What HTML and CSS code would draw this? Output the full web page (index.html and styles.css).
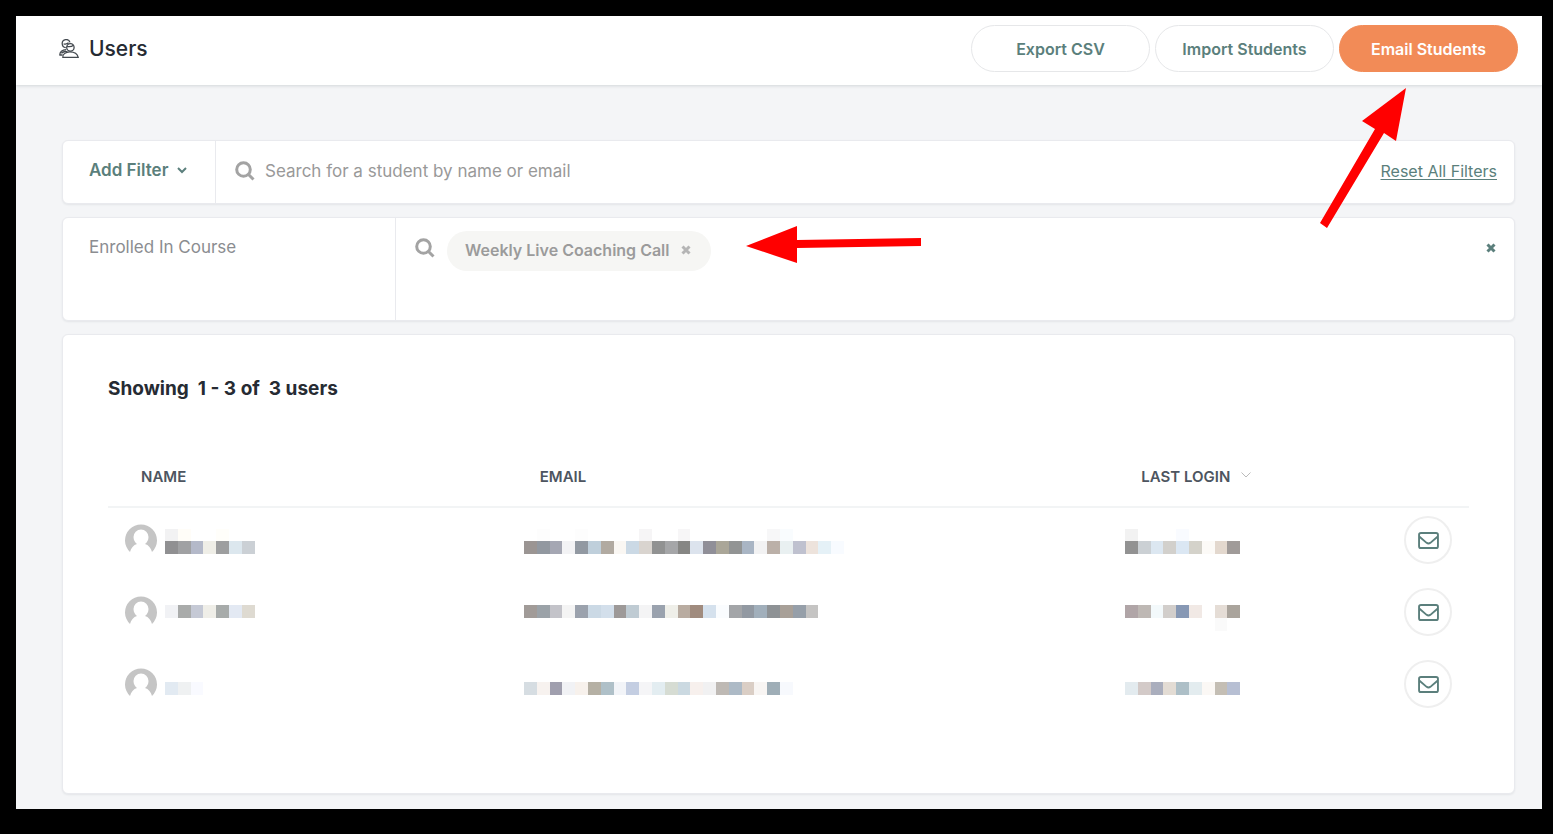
FILE: index.html
```html
<!DOCTYPE html>
<html lang="en">
<head>
    <meta charset="UTF-8">
    <meta name="viewport" content="width=device-width, initial-scale=1.0">
    <title>Users</title>
    <link rel="stylesheet" href="styles.css">
</head>
<body>
    <div class="page">
        <header class="topbar">
            <svg class="users-icon" viewBox="0 0 20 20" aria-hidden="true">
                <path d="M6.8 8.600A4 4 0 1 1 11 3.400M4.600 4.800c2 .6 3.600.2 5-1"/>
                <circle cx="11.400" cy="8.400" r="3.700"/>
                <path d="M7.900 7.400c2.500.6 5 .2 6.500-1.200"/>
                <path d="M3.800 18.400c-.6-2.600 2.600-5.600 7-5.600 4.800 0 7.800 2.600 8.400 5.600z"/>
                <path d="M3.600 16H.9c-.4-2.800 2.300-5.200 6.300-5.400M2.400 14.200c1.800-1.600 4-2 6-1.400"/>
            </svg>
            <h1>Users</h1>
            <div class="actions">
                <button class="btn" type="button">Export CSV</button>
                <button class="btn" type="button">Import Students</button>
                <button class="btn btn-primary" type="button">Email Students</button>
            </div>
            <svg class="arrow arrow-email" viewBox="0 0 88 144" aria-hidden="true">
                <path d="M87 1 43 34l13 8L1 136l7 5 57-95 12 8z"/>
            </svg>
        </header>

        <main>
            <section class="card search-card">
                <button class="add-filter" type="button">
                    Add Filter
                    <svg class="chevron" viewBox="0 0 12 8" aria-hidden="true"><path d="M2 2l4 4 4-4"/></svg>
                </button>
                <div class="search-box">
                    <svg class="search-icon" viewBox="0 0 20 20" aria-hidden="true"><circle cx="8.5" cy="8.5" r="6.8"/><path d="M13.5 13.5l5 5"/></svg>
                    <input type="text" aria-label="Search students" placeholder="Search for a student by name or email">
                    <a class="reset" href="#">Reset All Filters</a>
                </div>
            </section>

            <section class="card filter-card">
                <div class="filter-name">Enrolled In Course</div>
                <div class="filter-value">
                    <svg class="search-icon" viewBox="0 0 20 20" aria-hidden="true"><circle cx="8.5" cy="8.5" r="6.8"/><path d="M13.5 13.5l5 5"/></svg>
                    <span class="chip">
                        Weekly Live Coaching Call
                        <button class="close" type="button" aria-label="Remove course">
                            <svg viewBox="0 0 10 10" aria-hidden="true"><path d="M1.5 1.5l7 7M8.5 1.5l-7 7"/></svg>
                        </button>
                    </span>
                    <svg class="arrow arrow-chip" viewBox="0 0 176 38" aria-hidden="true">
                        <path d="M0 20 51 0v14l124-2v8l-124 2v15z"/>
                    </svg>
                    <button class="close close-filter" type="button" aria-label="Remove filter">
                        <svg viewBox="0 0 10 10" aria-hidden="true"><path d="M1.5 1.5l7 7M8.5 1.5l-7 7"/></svg>
                    </button>
                </div>
            </section>

            <section class="card list-card">
                <h2>Showing &nbsp;1 - 3 of &nbsp;3 users</h2>
                <table>
                    <thead>
                        <tr>
                            <th class="col-name">NAME</th>
                            <th class="col-email">EMAIL</th>
                            <th>LAST LOGIN <svg class="sort" viewBox="0 0 12 8" aria-hidden="true"><path d="M1.5 1.5l4.5 4.5 4.5-4.5"/></svg></th>
                            <th class="col-action"></th>
                        </tr>
                    </thead>
                    <tbody id="userList"></tbody>
                </table>
            </section>
        </main>
    </div>

    <script src="script.js"></script>
</body>
</html>
```

FILE: styles.css
```css
* {
    box-sizing: border-box;
}

body {
    margin: 0;
    padding: 16px 11px 25px 16px;
    background-color: #000;
    font-family: Inter, "Liberation Sans", sans-serif;
    font-size: 16px;
    color: #262b33;
}

button,
input {
    font-family: inherit;
    font-size: inherit;
}

button {
    padding: 0;
    border: none;
    background: none;
    color: #5b7f7c;
    cursor: pointer;
}

svg {
    display: block;
    flex: none;
    fill: none;
    stroke: currentColor;
}

.page {
    background-color: #f4f5f7;
}

.topbar {
    position: relative;
    display: flex;
    align-items: center;
    height: 69px;
    padding: 0 24px 4px 43px;
    background-color: #fff;
    box-shadow: 0 1px 3px rgba(40, 50, 70, 0.16);
}

.users-icon {
    width: 20px;
    height: 20px;
    color: #444a50;
    stroke-width: 1.3;
}

h1 {
    margin: 0 0 0 10px;
    font-size: 21px;
    font-weight: 500;
}

.actions {
    display: flex;
    gap: 5px;
    margin-left: auto;
}

.btn {
    width: 179px;
    height: 47px;
    border: 1px solid #e6e7e9;
    border-radius: 24px;
    background-color: #fff;
    font-weight: 600;
}

.btn-primary {
    border-color: #f28b57;
    background-color: #f28b57;
    color: #fff;
}

.arrow {
    fill: #f00;
    stroke: none;
}

.arrow-email {
    position: absolute;
    top: 71px;
    right: 135px;
    z-index: 1;
    width: 88px;
    height: 144px;
}

main {
    display: flex;
    flex-direction: column;
    gap: 13px;
    padding: 55px 27px 15px 46px;
}

.card {
    border: 1px solid #e9eaee;
    border-radius: 6px;
    background-color: #fff;
    box-shadow: 0 1px 2px rgba(40, 50, 70, 0.08);
}

.search-card {
    display: flex;
    height: 64px;
    font-size: 17px;
}

.add-filter {
    display: flex;
    align-items: center;
    gap: 8px;
    width: 153px;
    padding: 0 0 4px 26px;
    border-right: 1px solid #e9eaee;
    font-weight: 600;
}

.chevron {
    width: 12px;
    height: 8px;
    stroke-width: 2;
}

.search-box {
    display: flex;
    flex: 1;
    align-items: center;
    padding: 0 17px 2px 19px;
}

.search-icon {
    width: 20px;
    height: 20px;
    color: #a3a3a3;
    stroke-width: 3;
}

.search-box input {
    flex: 1;
    min-width: 0;
    padding: 0 10px;
    border: none;
    outline: none;
}

.search-box input::placeholder {
    color: #999;
    opacity: 1;
}

.reset {
    font-size: 16px;
    color: #5b7f7c;
    text-underline-offset: 2px;
}

.filter-card {
    display: flex;
    min-height: 104px;
}

.filter-name {
    width: 333px;
    padding: 19px 26px;
    border-right: 1px solid #e9eaee;
    font-size: 17px;
    line-height: 20px;
    color: #8b8d91;
}

.filter-value {
    display: flex;
    flex: 1;
    align-items: flex-start;
    padding: 13px 18px 13px 19px;
}

.filter-value .search-icon {
    margin-top: 7px;
}

.chip {
    display: flex;
    align-items: center;
    gap: 11px;
    height: 40px;
    margin: 0 35px 0 12px;
    padding: 0 20px 3px 18px;
    border-radius: 20px;
    background-color: #f6f6f4;
    font-weight: 600;
    color: #9b9b9b;
}

.close svg {
    width: 10px;
    height: 10px;
    stroke-width: 3;
}

.chip .close {
    color: #b5b5b5;
}

.arrow-chip {
    width: 176px;
    height: 38px;
    margin-top: -5px;
}

.close-filter {
    margin: 12px 0 0 auto;
}

.list-card {
    padding: 44px 45px 69px;
}

h2 {
    margin: 0;
    font-size: 19px;
    font-weight: 700;
    line-height: 20px;
}

table {
    width: 100%;
    margin-top: 47px;
    border-spacing: 0;
    table-layout: fixed;
}

th {
    height: 62px;
    padding: 0 33px;
    border-bottom: 2px solid #f2f4f5;
    font-size: 15px;
    font-weight: 600;
    color: #4d5560;
    text-align: left;
    white-space: nowrap;
}

.col-name {
    width: 29.3%;
}

.col-email {
    width: 44.2%;
}

.col-action {
    width: 10%;
}

.sort {
    display: inline-block;
    width: 12px;
    height: 8px;
    margin: 0 0 3px 6px;
    color: #bbb;
}

td {
    height: 72px;
    padding: 0 17px;
    vertical-align: top;
}

.user {
    display: flex;
    gap: 8px;
}

.avatar {
    width: 32px;
    height: 32px;
    margin-top: 16px;
    fill: #c5c5c5;
    stroke: none;
}

.mosaic {
    height: 64px;
    stroke: none;
}

.mail {
    display: flex;
    align-items: center;
    justify-content: center;
    width: 48px;
    height: 48px;
    margin: 8px 0 0 auto;
    border: 2px solid #efefef;
    border-radius: 50%;
}

.mail svg {
    width: 21px;
    height: 17px;
    stroke-width: 2;
}
```

FILE: script.js
```js
// side of one square in a masked value
const CELL = 12.8;

// each masked value is a list of strips: top edge, then one colour per square
const users = [
    {
        name: [
            [20.5, 'f2f2f3 fffdf8 - - fffefa'],
            [33.3, '909092 a0a1a3 b4b9c9 efeee7 9d9e9f dce7ee cbd0d5']
        ],
        email: [
            [20.5, '- fdfdfd - - fdfdfd - - - - f6f5f6 - - f7f6f7 - - - - - - f7f7f8 f9fcfe'],
            [33.3, '9b9593 9298a0 a5a7b3 f3f3f5 9299a2 bfcfdb b1aaa1 faf7f3 cbd9e5 d9d4cf 919292 a5a6a8 868684 dce3ed 908f98 aaa698 929494 a9b5c4 f2f2f3 bbb0a8 e9f0f1 bfc1cf ede3dc e5f1f7 f8fbff']
        ],
        login: [
            [20.5, 'f2f2f2 - - - f9fbff'],
            [33.3, '929292 cbd0d4 dce7f1 d2d0cc dbe7f3 d4d2ca fcfaf7 e3d8ce a09b99']
        ]
    },
    {
        name: [[25, 'f1f2f5 a9abaa c5c9d5 efeee8 a7abaa e3e9f3 dedad1']],
        email: [[25, 'a19b98 9ba2a8 c3c3c9 f4f4f4 9ba2ad cbd9e5 d3dfeb 9d9998 bfcbd3 f4f4f5 9aa2ae efefe9 b9aca1 a08b7e d5e1ed fafcfe a3a5a8 9299a2 a1afbb 8e9295 a8a098 969fa9 c5c4c3']],
        login: [
            [25, 'b0a5a7 beb8b4 f3f9fb d2cecb 8798b4 f1e9e5 - e5ddd6 aaa49c'],
            [37.8, '- - - - - - - fafafa']
        ]
    },
    {
        name: [[30, 'e2eaf2 eff1f2 f9faff']],
        email: [[30, 'd6dde2 f7f2ef a09fae f1f2f5 f7f1ec b5b0a4 afc0c8 f2f4f8 c4cee2 f5f5f7 e3edf1 d6dcd3 cbd9e1 f7f0ed f1f1f2 beb9b4 adbac6 dacec5 f8f5f3 9faeb7 f7f9fd']],
        login: [[30, 'e3ebef d3cac8 aaaebd e3dcd4 adbfc7 e3ecef fbf8f5 c4beb4 b7bfd3']]
    }
];

function mosaic(strips) {
    let cols = 0;
    let rects = '';
    strips.forEach(([y, colours]) => {
        const cells = colours.split(' ');
        cols = Math.max(cols, cells.length);
        cells.forEach((colour, i) => {
            if (colour !== '-') {
                rects += `<rect x="${i * CELL}" y="${y}" width="${CELL}" height="${CELL}" fill="#${colour}"/>`;
            }
        });
    });
    const width = Math.ceil(cols * CELL);
    return `<svg class="mosaic" width="${width}" viewBox="0 0 ${width} 64" shape-rendering="crispEdges" aria-hidden="true">${rects}</svg>`;
}

function renderUsers() {
    document.getElementById('userList').innerHTML = users.map(user => `
        <tr>
            <td>
                <div class="user">
                    <svg class="avatar" viewBox="0 0 32 32" aria-hidden="true">
                        <path d="M5 28A16 16 0 1 1 27 28C26 24 23.5 21 20 20c2-1.5 3.5-4 3.5-7a7.5 7.5 0 0 0-15 0c0 3 1.5 5.5 3.5 7-3.5 1-6 4-7 8z"/>
                    </svg>
                    ${mosaic(user.name)}
                </div>
            </td>
            <td>${mosaic(user.email)}</td>
            <td>${mosaic(user.login)}</td>
            <td>
                <button class="mail" type="button" aria-label="Email user">
                    <svg viewBox="0 0 22 18" aria-hidden="true">
                        <rect x="1" y="1" width="20" height="16" rx="2"/>
                        <path d="M1.5 5l7.5 6.5q2 1.5 4 0L20.5 5"/>
                    </svg>
                </button>
            </td>
        </tr>
    `).join('');
}

renderUsers();
```
